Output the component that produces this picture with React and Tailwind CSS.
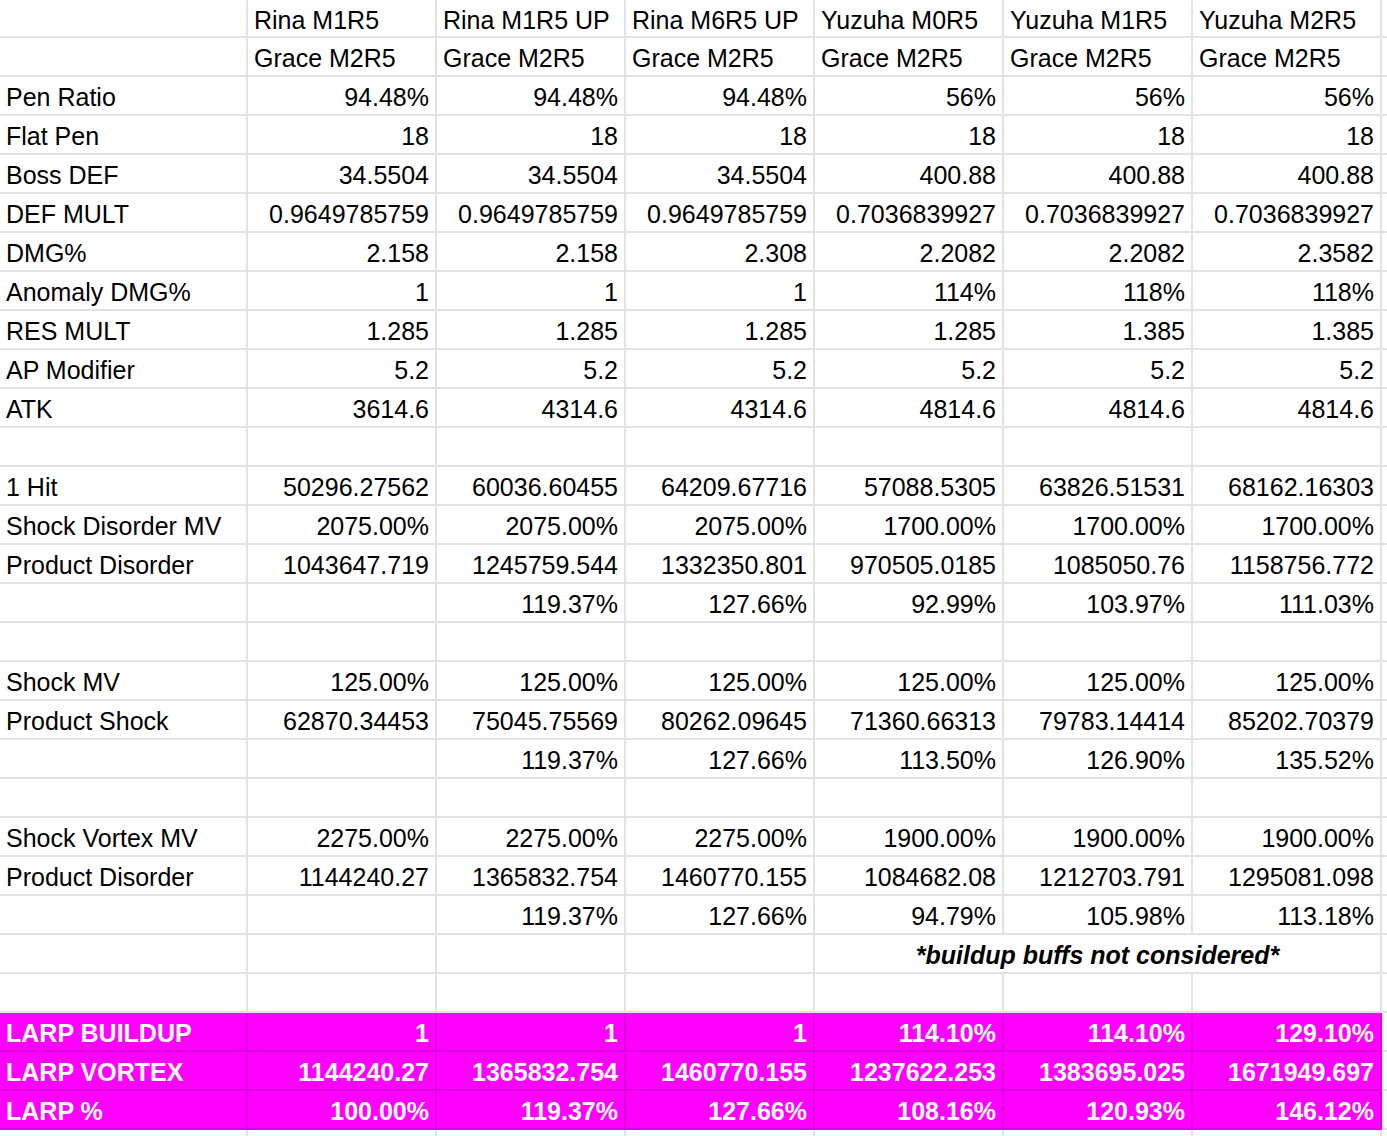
import React from 'react';

const heads = ['Rina M1R5', 'Rina M1R5 UP', 'Rina M6R5 UP', 'Yuzuha M0R5', 'Yuzuha M1R5', 'Yuzuha M2R5'];

const rows = [
  { label: '', cells: heads, align: 'left' },
  { label: '', cells: Array(6).fill('Grace M2R5'), align: 'left' },
  { label: 'Pen Ratio', cells: ['94.48%', '94.48%', '94.48%', '56%', '56%', '56%'] },
  { label: 'Flat Pen', cells: ['18', '18', '18', '18', '18', '18'] },
  { label: 'Boss DEF', cells: ['34.5504', '34.5504', '34.5504', '400.88', '400.88', '400.88'] },
  { label: 'DEF MULT', cells: ['0.9649785759', '0.9649785759', '0.9649785759', '0.7036839927', '0.7036839927', '0.7036839927'] },
  { label: 'DMG%', cells: ['2.158', '2.158', '2.308', '2.2082', '2.2082', '2.3582'] },
  { label: 'Anomaly DMG%', cells: ['1', '1', '1', '114%', '118%', '118%'] },
  { label: 'RES MULT', cells: ['1.285', '1.285', '1.285', '1.285', '1.385', '1.385'] },
  { label: 'AP Modifier', cells: ['5.2', '5.2', '5.2', '5.2', '5.2', '5.2'] },
  { label: 'ATK', cells: ['3614.6', '4314.6', '4314.6', '4814.6', '4814.6', '4814.6'] },
  { label: '', cells: Array(6).fill('') },
  { label: '1 Hit', cells: ['50296.27562', '60036.60455', '64209.67716', '57088.5305', '63826.51531', '68162.16303'] },
  { label: 'Shock Disorder MV', cells: ['2075.00%', '2075.00%', '2075.00%', '1700.00%', '1700.00%', '1700.00%'] },
  { label: 'Product Disorder', cells: ['1043647.719', '1245759.544', '1332350.801', '970505.0185', '1085050.76', '1158756.772'] },
  { label: '', cells: ['', '119.37%', '127.66%', '92.99%', '103.97%', '111.03%'] },
  { label: '', cells: Array(6).fill('') },
  { label: 'Shock MV', cells: Array(6).fill('125.00%') },
  { label: 'Product Shock', cells: ['62870.34453', '75045.75569', '80262.09645', '71360.66313', '79783.14414', '85202.70379'] },
  { label: '', cells: ['', '119.37%', '127.66%', '113.50%', '126.90%', '135.52%'] },
  { label: '', cells: Array(6).fill('') },
  { label: 'Shock Vortex MV', cells: ['2275.00%', '2275.00%', '2275.00%', '1900.00%', '1900.00%', '1900.00%'] },
  { label: 'Product Disorder', cells: ['1144240.27', '1365832.754', '1460770.155', '1084682.08', '1212703.791', '1295081.098'] },
  { label: '', cells: ['', '119.37%', '127.66%', '94.79%', '105.98%', '113.18%'] },
  { label: '', note: '*buildup buffs not considered*' },
  { label: '', cells: Array(6).fill('') },
  { label: 'LARP BUILDUP', cells: ['1', '1', '1', '114.10%', '114.10%', '129.10%'], larp: true },
  { label: 'LARP VORTEX', cells: ['1144240.27', '1365832.754', '1460770.155', '1237622.253', '1383695.025', '1671949.697'], larp: true },
  { label: 'LARP %', cells: ['100.00%', '119.37%', '127.66%', '108.16%', '120.93%', '146.12%'], larp: true },
];

function Cell({ children, wide, right, larp, span }) {
  const width = wide ? 'w-[248px]' : span ? 'w-[567px]' : 'w-[189px]';
  const tone = larp
    ? 'bg-[#ff00ff] border-[#e000e0] text-white font-bold'
    : 'bg-white border-[#e2e2e2] text-black';
  const justify = span ? 'justify-center' : right ? 'justify-end' : 'justify-start';
  return (
    <div className={`${width} ${tone} ${justify} shrink-0 flex items-center pt-[4px] px-[6px] border-r-2 border-b-2 overflow-hidden whitespace-nowrap`}>
      {children}
    </div>
  );
}

function Row({ row, first }) {
  const h = first ? 'h-[38px]' : 'h-[39px]';
  return (
    <div className={`flex ${h}`}>
      <Cell wide larp={row.larp}>{row.label}</Cell>
      {row.note ? (
        <>
          <Cell />
          <Cell />
          <Cell />
          <Cell span right>
            <span className="font-bold italic">{row.note}</span>
          </Cell>
        </>
      ) : (
        row.cells.map((c, i) => (
          <Cell key={i} right={row.align !== 'left'} larp={row.larp}>{c}</Cell>
        ))
      )}
      <div className="flex-1 border-b-2 border-[#e2e2e2] bg-white" />
    </div>
  );
}

export default function App() {
  return (
    <div
      className="w-[1387px] h-[1136px] overflow-hidden bg-white text-[25px] leading-none"
      style={{ fontFamily: '"Liberation Sans", Arial, sans-serif' }}
    >
      {rows.map((r, i) => (
        <Row key={i} row={r} first={i === 0} />
      ))}
      <div className="flex h-[8px]">
        <div className="w-[248px] shrink-0 border-r-2 border-[#e2e2e2]" />
        {heads.map((h) => (
          <div key={h} className="w-[189px] shrink-0 border-r-2 border-[#e2e2e2]" />
        ))}
      </div>
    </div>
  );
}
